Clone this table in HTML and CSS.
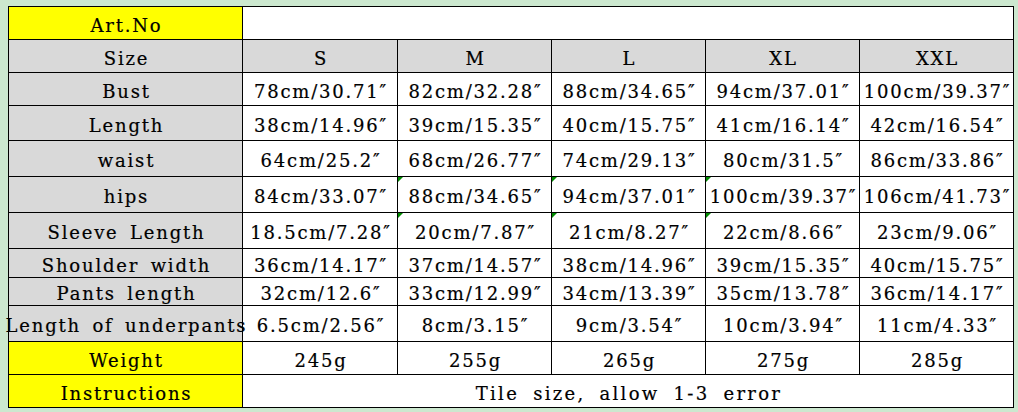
FILE: index.html
```html
<!DOCTYPE html>
<html>
<head>
<meta charset="utf-8">
<link rel="stylesheet" href="styles.css">
</head>
<body>
<div class="sheet">
  <div class="cell yl">Art.No</div><div class="cell wide"></div>

  <div class="cell hd">Size</div><div class="cell hd">S</div><div class="cell hd">M</div><div class="cell hd">L</div><div class="cell hd">XL</div><div class="cell hd">XXL</div>

  <div class="cell hd">Bust</div><div class="cell">78cm/30.71″</div><div class="cell">82cm/32.28″</div><div class="cell">88cm/34.65″</div><div class="cell">94cm/37.01″</div><div class="cell">100cm/39.37″</div>

  <div class="cell hd">Length</div><div class="cell">38cm/14.96″</div><div class="cell">39cm/15.35″</div><div class="cell">40cm/15.75″</div><div class="cell">41cm/16.14″</div><div class="cell">42cm/16.54″</div>

  <div class="cell hd">waist</div><div class="cell">64cm/25.2″</div><div class="cell">68cm/26.77″</div><div class="cell">74cm/29.13″</div><div class="cell">80cm/31.5″</div><div class="cell">86cm/33.86″</div>

  <div class="cell hd">hips</div><div class="cell">84cm/33.07″</div><div class="cell flag">88cm/34.65″</div><div class="cell flag">94cm/37.01″</div><div class="cell flag">100cm/39.37″</div><div class="cell">106cm/41.73″</div>

  <div class="cell hd">Sleeve Length</div><div class="cell">18.5cm/7.28″</div><div class="cell flag">20cm/7.87″</div><div class="cell flag">21cm/8.27″</div><div class="cell flag">22cm/8.66″</div><div class="cell">23cm/9.06″</div>

  <div class="cell hd">Shoulder width</div><div class="cell">36cm/14.17″</div><div class="cell">37cm/14.57″</div><div class="cell">38cm/14.96″</div><div class="cell">39cm/15.35″</div><div class="cell">40cm/15.75″</div>

  <div class="cell hd">Pants length</div><div class="cell">32cm/12.6″</div><div class="cell">33cm/12.99″</div><div class="cell">34cm/13.39″</div><div class="cell">35cm/13.78″</div><div class="cell">36cm/14.17″</div>

  <div class="cell hd over">Length of underpants</div><div class="cell">6.5cm/2.56″</div><div class="cell">8cm/3.15″</div><div class="cell">9cm/3.54″</div><div class="cell">10cm/3.94″</div><div class="cell">11cm/4.33″</div>

  <div class="cell yl">Weight</div><div class="cell">245g</div><div class="cell">255g</div><div class="cell">265g</div><div class="cell">275g</div><div class="cell">285g</div>

  <div class="cell yl">Instructions</div><div class="cell wide note">Tile size, allow 1-3 error</div>
</div>
</body>
</html>
```

FILE: styles.css
```css
html, body {
  margin: 0;
  background: #cce8cf;
}
body {
  padding: 6px 0 0 8px;
  font-family: "DejaVu Serif", "Liberation Serif", serif;
  font-size: 18px;
  letter-spacing: 1.8px;
  word-spacing: 4px;
  color: #000;
  -webkit-text-stroke: 0.2px #000;
}
.sheet {
  display: grid;
  width: 1006px;
  box-sizing: border-box;
  grid-template-columns: 233px 154px 153px 153px 153px 153px;
  grid-template-rows: 32px 32px 32px 34px 35px 35px 35px 28px 27px 35px 32px 32px;
  gap: 1px;
  padding: 1px;
  background: #000;
}
.cell {
  position: relative;
  background: #fff;
  display: flex;
  align-items: center;
  justify-content: center;
  white-space: nowrap;
  padding-top: 4px;
  padding-left: 2px;
  box-sizing: border-box;
}
.hd { background: #d9d9d9; }
.yl { background: #ffff00; }
.wide { grid-column: span 5; }
.note { letter-spacing: 2.3px; word-spacing: 6px; }
.over { z-index: 1; }
.flag::before {
  content: "";
  position: absolute;
  left: 0;
  top: 0;
  border-top: 5px solid #008a00;
  border-right: 5px solid transparent;
}
```
